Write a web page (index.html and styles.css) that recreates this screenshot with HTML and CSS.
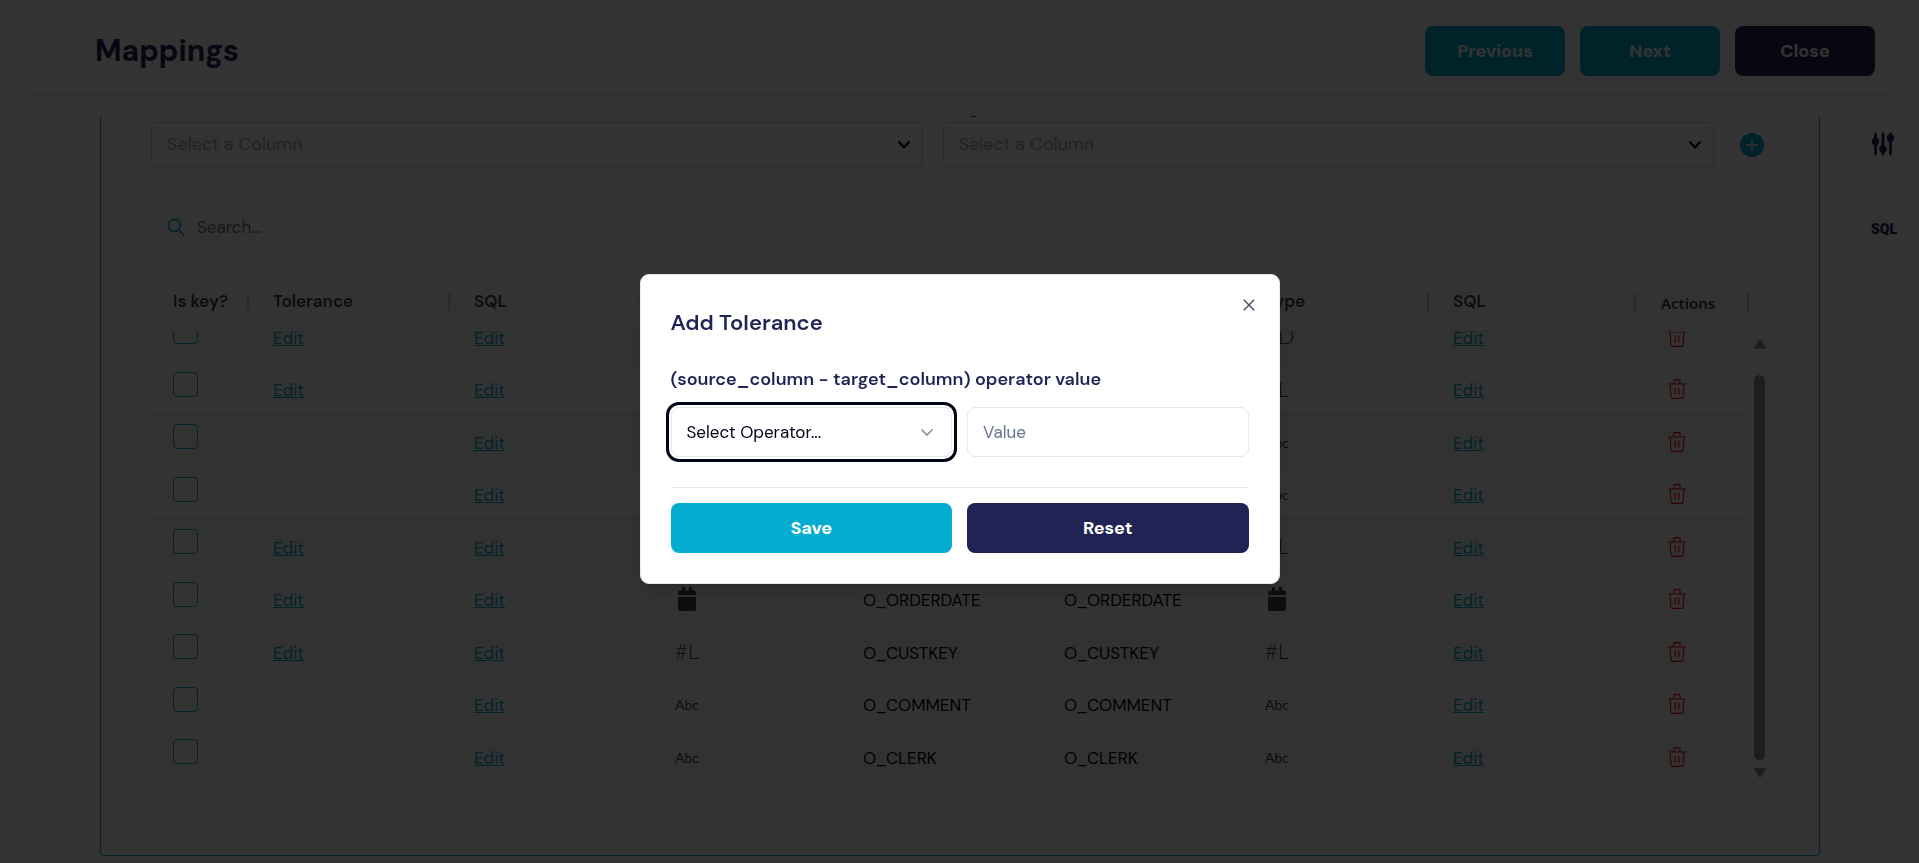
FILE: index.html
```html
<!DOCTYPE html>
<html lang="en">
<head>
<meta charset="utf-8">
<meta name="viewport" content="width=device-width, initial-scale=1">
<title>Mappings</title>
<link rel="stylesheet" href="styles.css">
</head>
<body>
<svg class="sprite" aria-hidden="true">
  <symbol id="i-chevron" viewBox="0 0 14 14"><path d="M2 4l5 5.500 5-5.500" fill="none" stroke="currentColor" stroke-width="2" stroke-linecap="round" stroke-linejoin="round"/></symbol>
  <symbol id="i-chevron-thin" viewBox="0 0 14 14"><path d="M1.500 4.500L7 10l5.500-5.500" fill="none" stroke="currentColor" stroke-width="1.600"/></symbol>
  <symbol id="i-trash" viewBox="0 0 18 20"><path d="M.5 5h17M6 5V1.200Q6 .6 6.600.6h4.800q.6 0 .6.600V5M2 5l1 13.200q.1 1.200 1.300 1.200h9.400q1.200 0 1.300-1.200L16 5M7.200 8.500v7M10.800 8.500v7" fill="none" stroke="currentColor" stroke-width="1.100"/></symbol>
  <symbol id="i-date" viewBox="0 0 18 24"><path d="M0 8V5.500Q0 3.500 2 3.500h2V1q0-1 1-1h1.200q1 0 1 1v2.500h3.600V1q0-1 1-1H13q1 0 1 1v2.500h2q2 0 2 2V8zM0 9.800h18V22q0 2-2 2H2q-2 0-2-2z" fill="currentColor"/></symbol>
  <symbol id="i-search" viewBox="0 0 18 18"><path d="M11.800 12l5 5M13.300 7.400a6 6 0 1 1-12 0 6 6 0 0 1 12 0z" fill="none" stroke="currentColor" stroke-width="1.600" stroke-linecap="round"/></symbol>
</svg>

<header class="page-header">
  <h1>Mappings</h1>
  <div class="header-actions">
    <button class="btn btn-primary" type="button">Previous</button>
    <button class="btn btn-primary" type="button">Next</button>
    <button class="btn btn-dark" type="button">Close</button>
  </div>
</header>

<main class="workspace">
  <section class="panel">
    <div class="pickers">
      <div class="picker">
        <label for="source-column">Source Column</label>
        <div class="select-box">
          <select id="source-column"><option>Select a Column</option></select>
          <svg class="caret"><use href="#i-chevron"/></svg>
        </div>
      </div>
      <div class="picker">
        <label for="target-column">Target Column</label>
        <div class="select-box">
          <select id="target-column"><option>Select a Column</option></select>
          <svg class="caret"><use href="#i-chevron"/></svg>
        </div>
      </div>
      <button class="add" type="button" aria-label="Add mapping">
        <svg viewBox="0 0 24 24"><circle cx="12" cy="12" r="12" fill="currentColor"/><path d="M12 6v12M6 12h12" stroke="#fff" stroke-width="1.300"/></svg>
      </button>
    </div>

    <div class="search">
      <svg class="search-icon"><use href="#i-search"/></svg>
      <input type="search" placeholder="Search..." aria-label="Search">
    </div>

    <div class="grid-head">
      <table class="grid">
        <colgroup><col class="c-key"><col class="c-text"><col class="c-text"><col class="c-type"><col class="c-text"><col class="c-text"><col class="c-type"><col class="c-sql"><col class="c-act"></colgroup>
        <thead>
          <tr><th>Is key?</th><th>Tolerance</th><th>SQL</th><th>Type</th><th>Source</th><th>Target</th><th>Type</th><th>SQL</th><th class="th-actions">Actions</th></tr>
        </thead>
      </table>
    </div>
    <div class="grid-body">
      <div class="grid-view">
        <table class="grid">
          <colgroup><col class="c-key"><col class="c-text"><col class="c-text"><col class="c-type"><col class="c-text"><col class="c-text"><col class="c-type"><col class="c-sql"><col class="c-act"></colgroup>
          <tbody>
            <tr><td class="key"><input type="checkbox" aria-label="O_TOTALPRICE is key"></td><td><a href="#">Edit</a></td><td><a href="#">Edit</a></td><td class="type"><span class="t-num">#D</span></td><td>O_TOTALPRICE</td><td>O_TOTALPRICE</td><td class="type"><span class="t-num">#D</span></td><td><a href="#">Edit</a></td><td class="act"><button type="button" aria-label="Delete"><svg><use href="#i-trash"/></svg></button></td></tr>
            <tr><td class="key"><input type="checkbox" aria-label="O_SHIPPRIORITY is key"></td><td><a href="#">Edit</a></td><td><a href="#">Edit</a></td><td class="type"><span class="t-num">#L</span></td><td>O_SHIPPRIORITY</td><td>O_SHIPPRIORITY</td><td class="type"><span class="t-num">#L</span></td><td><a href="#">Edit</a></td><td class="act"><button type="button" aria-label="Delete"><svg><use href="#i-trash"/></svg></button></td></tr>
            <tr><td class="key"><input type="checkbox" aria-label="O_ORDERSTATUS is key"></td><td></td><td><a href="#">Edit</a></td><td class="type"><span class="t-abc">Abc</span></td><td>O_ORDERSTATUS</td><td>O_ORDERSTATUS</td><td class="type"><span class="t-abc">Abc</span></td><td><a href="#">Edit</a></td><td class="act"><button type="button" aria-label="Delete"><svg><use href="#i-trash"/></svg></button></td></tr>
            <tr><td class="key"><input type="checkbox" aria-label="O_ORDERPRIORITY is key"></td><td></td><td><a href="#">Edit</a></td><td class="type"><span class="t-abc">Abc</span></td><td>O_ORDERPRIORITY</td><td>O_ORDERPRIORITY</td><td class="type"><span class="t-abc">Abc</span></td><td><a href="#">Edit</a></td><td class="act"><button type="button" aria-label="Delete"><svg><use href="#i-trash"/></svg></button></td></tr>
            <tr><td class="key"><input type="checkbox" aria-label="O_ORDERKEY is key"></td><td><a href="#">Edit</a></td><td><a href="#">Edit</a></td><td class="type"><span class="t-num">#L</span></td><td>O_ORDERKEY</td><td>O_ORDERKEY</td><td class="type"><span class="t-num">#L</span></td><td><a href="#">Edit</a></td><td class="act"><button type="button" aria-label="Delete"><svg><use href="#i-trash"/></svg></button></td></tr>
            <tr><td class="key"><input type="checkbox" aria-label="O_ORDERDATE is key"></td><td><a href="#">Edit</a></td><td><a href="#">Edit</a></td><td class="date"><svg><use href="#i-date"/></svg></td><td>O_ORDERDATE</td><td>O_ORDERDATE</td><td class="date"><svg><use href="#i-date"/></svg></td><td><a href="#">Edit</a></td><td class="act"><button type="button" aria-label="Delete"><svg><use href="#i-trash"/></svg></button></td></tr>
            <tr><td class="key"><input type="checkbox" aria-label="O_CUSTKEY is key"></td><td><a href="#">Edit</a></td><td><a href="#">Edit</a></td><td class="type"><span class="t-num">#L</span></td><td>O_CUSTKEY</td><td>O_CUSTKEY</td><td class="type"><span class="t-num">#L</span></td><td><a href="#">Edit</a></td><td class="act"><button type="button" aria-label="Delete"><svg><use href="#i-trash"/></svg></button></td></tr>
            <tr><td class="key"><input type="checkbox" aria-label="O_COMMENT is key"></td><td></td><td><a href="#">Edit</a></td><td class="type"><span class="t-abc">Abc</span></td><td>O_COMMENT</td><td>O_COMMENT</td><td class="type"><span class="t-abc">Abc</span></td><td><a href="#">Edit</a></td><td class="act"><button type="button" aria-label="Delete"><svg><use href="#i-trash"/></svg></button></td></tr>
            <tr><td class="key"><input type="checkbox" aria-label="O_CLERK is key"></td><td></td><td><a href="#">Edit</a></td><td class="type"><span class="t-abc">Abc</span></td><td>O_CLERK</td><td>O_CLERK</td><td class="type"><span class="t-abc">Abc</span></td><td><a href="#">Edit</a></td><td class="act"><button type="button" aria-label="Delete"><svg><use href="#i-trash"/></svg></button></td></tr>
          </tbody>
        </table>
      </div>
      <div class="scrollbar" aria-hidden="true">
        <svg viewBox="0 0 12 10"><path d="M6 1l4.800 8H1.200z" fill="currentColor" stroke="currentColor" stroke-width="1.500" stroke-linejoin="round"/></svg>
        <span class="thumb"></span>
        <svg viewBox="0 0 12 10"><path d="M6 9L1.200 1h9.600z" fill="currentColor" stroke="currentColor" stroke-width="1.500" stroke-linejoin="round"/></svg>
      </div>
    </div>
  </section>

  <aside class="rail">
    <button type="button" aria-label="Filters">
      <svg viewBox="0 0 24 24"><path d="M4.500 2v20M12 2v20M19.500 2v20" stroke="currentColor" stroke-width="2.800" stroke-linecap="round"/><circle cx="4.500" cy="9.500" r="3.700" fill="currentColor"/><circle cx="12" cy="17" r="3.700" fill="currentColor"/><circle cx="19.500" cy="6" r="3.700" fill="currentColor"/></svg>
    </button>
    <button type="button" class="rail-sql">SQL</button>
  </aside>
</main>

<div class="backdrop">
  <form class="modal" role="dialog" aria-labelledby="modal-title">
    <button class="modal-close" type="button" aria-label="Close dialog">
      <svg viewBox="0 0 12 12"><path d="M.8.8l10.400 10.400M11.200.8L.8 11.200" stroke="currentColor" stroke-width="1.500"/></svg>
    </button>
    <h2 id="modal-title">Add Tolerance</h2>
    <label class="formula" for="operator">(source_column - target_column) operator value</label>
    <div class="pair">
      <div class="select-box operator">
        <select id="operator"><option>Select Operator...</option></select>
        <svg class="caret"><use href="#i-chevron-thin"/></svg>
      </div>
      <input class="value" type="text" placeholder="Value" aria-label="Value">
    </div>
    <hr>
    <div class="pair">
      <button class="btn btn-primary" type="button">Save</button>
      <button class="btn btn-dark" type="button">Reset</button>
    </div>
  </form>
</div>
</body>
</html>
```
FILE: styles.css
```css
:root {
  --cyan: #04add0;
  --navy: #1f2454;
  --line: #e2e8f0;
  --rule: #dde1e6;
}
* { box-sizing: border-box; }
body {
  margin: 0;
  background: #fff;
  color: #020617;
  font-family: "DM Sans", Inter, "Open Sans", sans-serif;
  font-size: 17px;
}
button, input, select { font: inherit; color: inherit; }
button { border: 0; background: none; padding: 0; cursor: pointer; }
select { appearance: none; }
.sprite { display: none; }

.page-header {
  display: flex;
  align-items: center;
  justify-content: space-between;
  height: 96px;
  margin: 0 29px 0 30px;
  padding: 7px 15px 0 65px;
  border-bottom: 1px solid var(--rule);
}
.page-header h1 {
  margin: 0 0 2px;
  font-size: 30px;
  font-weight: 700;
  color: var(--navy);
}
.header-actions { display: flex; gap: 15px; }
.header-actions .btn { width: 140px; }
.btn {
  height: 50px;
  border-radius: 8px;
  font-size: 18px;
  font-weight: 700;
  color: #fff;
}
.btn-primary { background: var(--cyan); }
.btn-dark { background: var(--navy); }

.workspace { display: flex; align-items: flex-start; gap: 28px; padding-left: 100px; }
.panel {
  flex: 1;
  min-width: 0;
  margin-top: 20px;
  padding: 0 50px 72px;
  border: 1px solid var(--cyan);
  border-top: 0;
  border-radius: 0 0 4px 4px;
  overflow: hidden;
}
.pickers {
  display: grid;
  grid-template-columns: 1fr 1fr 35px;
  gap: 20px;
  align-items: end;
  margin-top: -21px;
}
.picker label {
  display: block;
  margin-bottom: 3px;
  line-height: 24px;
  font-size: 18px;
  font-weight: 600;
  color: var(--navy);
}
.select-box { display: grid; align-items: center; }
.select-box > * { grid-area: 1 / 1; }
.select-box select {
  width: 100%;
  height: 45px;
  padding: 0 15px 2px;
  border: 1px solid #c8ccd2;
  border-radius: 5px;
  background: #fff;
  font-size: 18px;
  color: #aaa;
}
.caret {
  width: 14px;
  height: 14px;
  margin-right: 12px;
  justify-self: end;
  color: #000;
  pointer-events: none;
}
.add { display: flex; justify-content: center; align-items: center; height: 45px; color: var(--cyan); }
.add svg { width: 24px; height: 24px; }

.search {
  display: flex;
  align-items: center;
  gap: 12px;
  width: 400px;
  height: 50px;
  margin-top: 35px;
  padding: 0 15px;
  border: 1px solid var(--line);
  border-radius: 8px;
}
.search-icon { width: 18px; height: 18px; color: var(--cyan); }
.search input { flex: 1; border: 0; padding: 0; outline: 0; background: none; }
.search input::placeholder, .value::placeholder { color: #64748b; opacity: 1; }

.grid-head { margin-top: 19px; padding-right: 19px; border-bottom: 1px solid var(--rule); }
.grid { width: 100%; table-layout: fixed; border-collapse: separate; border-spacing: 0; }
.c-key { width: 99px; }
.c-text { width: 201px; }
.c-type { width: 188px; }
.c-sql { width: 207px; }
.c-act { width: 113px; }
.grid th {
  position: relative;
  height: 60px;
  padding: 0 0 1px 23px;
  text-align: left;
  font-size: 17px;
  font-weight: 600;
  color: #444;
}
.grid th:first-child { padding-left: 22px; }
.grid th::after {
  content: "";
  position: absolute;
  right: 1px;
  top: 22px;
  width: 2px;
  height: 18px;
  background: #d0d3d8;
}
.grid .th-actions { padding: 3px 0 0 24px; font-family: "Noto Sans", sans-serif; font-size: 15px; }
.grid-body { display: flex; }
.grid-view { flex: 1; min-width: 0; overflow: hidden; }
.grid-view .grid { margin-top: -22px; }
.grid td {
  height: 52px;
  padding: 3px 0 0 23px;
  border-bottom: 1px solid var(--rule);
  white-space: nowrap;
}
.grid tr:nth-child(odd) td { height: 53px; background: #f8f8f8; }
.grid td.key { padding: 9px 0 0 22px; vertical-align: top; }
.key input {
  display: block;
  appearance: none;
  width: 25px;
  height: 25px;
  margin: 0;
  border: 1px solid var(--cyan);
  border-radius: 4px;
}
.grid a { color: var(--cyan); text-decoration: underline; }
.grid td.type { padding: 0 0 0 23px; font-family: Lato, sans-serif; color: #444; }
.t-num { font-size: 22px; font-weight: 300; line-height: 24px; }
.t-abc { font-size: 14px; }
.grid td.date { padding: 0 0 0 26px; }
.date svg { display: block; width: 18px; height: 24px; color: #444; }
.grid td.act { padding: 1px 0 0 31px; }
.act button { display: block; color: #f00; }
.act svg { display: block; width: 18px; height: 20px; }
.scrollbar {
  display: flex;
  flex-direction: column;
  align-items: center;
  justify-content: space-between;
  width: 19px;
  padding: 7px 0 5px;
  background: #fcfcfc;
  color: #8f8f8f;
}
.scrollbar svg { width: 12px; height: 10px; }
.thumb { flex: 1; width: 11px; margin: 26px 0 8px; border-radius: 6px; background: currentColor; }

.rail { display: flex; flex-direction: column; gap: 13px; width: 71px; margin-top: 12px; }
.rail button {
  display: flex;
  align-items: center;
  height: 72px;
  padding-left: 22px;
  border: 1px solid var(--line);
  border-right: 0;
  border-radius: 8px 0 0 8px;
  color: var(--navy);
}
.rail svg { width: 24px; height: 24px; }
.rail .rail-sql { font-family: Roboto, sans-serif; font-size: 14px; font-weight: 900; }

.backdrop {
  position: fixed;
  inset: 0;
  display: grid;
  place-items: center;
  padding-bottom: 6px;
  background: rgba(0, 0, 0, .8);
}
.modal {
  position: relative;
  width: 640px;
  max-width: 100%;
  padding: 30px;
  border: 1px solid var(--line);
  border-radius: 9px;
  background: #fff;
  box-shadow: 0 10px 15px -3px rgba(0, 0, 0, .2);
}
.modal-close { position: absolute; top: 24px; right: 24px; width: 12px; height: 12px; color: #475069; }
.modal-close svg { display: block; }
.modal h2 { margin: 0; line-height: 36px; font-size: 22px; font-weight: 600; color: var(--navy); }
.formula { display: block; margin: 26px 0 16px; line-height: 24px; font-size: 18px; font-weight: 600; color: var(--navy); }
.pair { display: grid; grid-template-columns: 1fr 1fr; gap: 15px; }
.operator select, .value {
  width: 100%;
  height: 50px;
  padding: 0 15px;
  border: 1px solid var(--line);
  border-radius: 8px;
  font-size: 17px;
  color: #020617;
}
.operator select { outline: 3px solid #020617; outline-offset: 2px; }
.operator .caret { margin-right: 18px; color: #8a8f99; }
.modal hr { height: 1px; margin: 30px 0 15px; border: 0; background: var(--line); }
```
